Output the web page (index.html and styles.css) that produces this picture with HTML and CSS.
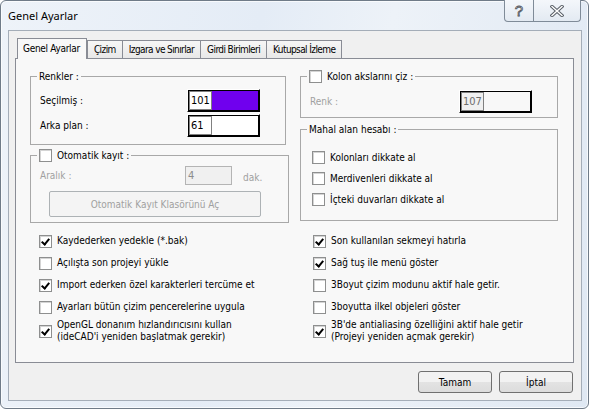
FILE: index.html
```html
<!DOCTYPE html>
<html lang="tr">
<head>
    <meta charset="UTF-8">
    <title>Genel Ayarlar</title>
    <link rel="stylesheet" href="styles.css">
</head>
<body>
    <div class="window">
        <div class="titlebar">
            <span class="title">Genel Ayarlar</span>
            <div class="caption-buttons">
                <span class="cap-btn help">?</span>
                <span class="cap-btn close">
                    <svg width="14" height="12" viewBox="0 0 14 12">
                        <path class="x-outline" d="M2 1.5 L12 10.5 M12 1.5 L2 10.5"/>
                        <path class="x-fill" d="M2 1.5 L12 10.5 M12 1.5 L2 10.5"/>
                    </svg>
                </span>
            </div>
        </div>

        <div class="client">
            <div class="tabs">
                <span class="tab active">Genel Ayarlar</span>
                <span class="tab">Çizim</span>
                <span class="tab">Izgara ve Sınırlar</span>
                <span class="tab">Girdi Birimleri</span>
                <span class="tab">Kutupsal İzleme</span>
            </div>

            <div class="panel">
                <div class="groups">
                    <div class="col">
                        <fieldset class="group colors">
                            <legend>Renkler :</legend>
                            <div class="field-row">
                                <span class="field-label">Seçilmiş :</span>
                                <span class="color-field">
                                    <span class="color-inner">
                                        <span class="color-num">101</span>
                                        <span class="color-swatch purple"></span>
                                    </span>
                                </span>
                            </div>
                            <div class="field-row">
                                <span class="field-label">Arka plan :</span>
                                <span class="color-field">
                                    <span class="color-inner">
                                        <span class="color-num">61</span>
                                        <span class="color-swatch white"></span>
                                    </span>
                                </span>
                            </div>
                        </fieldset>

                        <fieldset class="group autosave">
                            <legend><span class="box"></span>Otomatik kayıt :</legend>
                            <div class="interval-row">
                                <span class="field-label muted">Aralık :</span>
                                <span class="num-input">4</span>
                                <span class="muted unit">dak.</span>
                            </div>
                            <button class="folder-btn" disabled>Otomatik Kayıt Klasörünü Aç</button>
                        </fieldset>
                    </div>

                    <div class="col">
                        <fieldset class="group axes">
                            <legend><span class="box"></span>Kolon akslarını çiz :</legend>
                            <div class="field-row">
                                <span class="field-label muted axes-label">Renk :</span>
                                <span class="color-field off">
                                    <span class="color-inner">
                                        <span class="color-num">107</span>
                                        <span class="color-swatch"></span>
                                    </span>
                                </span>
                            </div>
                        </fieldset>

                        <fieldset class="group area">
                            <legend>Mahal alan hesabı :</legend>
                            <label class="check"><span class="box"></span>Kolonları dikkate al</label>
                            <label class="check"><span class="box"></span>Merdivenleri dikkate al</label>
                            <label class="check"><span class="box"></span>İçteki duvarları dikkate al</label>
                        </fieldset>
                    </div>
                </div>

                <div class="options">
                    <label class="check"><span class="box on"></span>Kaydederken yedekle (*.bak)</label>
                    <label class="check"><span class="box on"></span>Son kullanılan sekmeyi hatırla</label>
                    <label class="check"><span class="box"></span>Açılışta son projeyi yükle</label>
                    <label class="check"><span class="box on"></span>Sağ tuş ile menü göster</label>
                    <label class="check"><span class="box on"></span>Import ederken özel karakterleri tercüme et</label>
                    <label class="check"><span class="box"></span>3Boyut çizim modunu aktif hale getir.</label>
                    <label class="check"><span class="box"></span>Ayarları bütün çizim pencerelerine uygula</label>
                    <label class="check"><span class="box"></span>3boyutta ilkel objeleri göster</label>
                    <label class="check tall"><span class="box on"></span>OpenGL donanım hızlandırıcısını kullan<br>(ideCAD'i yeniden başlatmak gerekir)</label>
                    <label class="check tall"><span class="box on"></span>3B'de antialiasing özelliğini aktif hale getir<br>(Projeyi yeniden açmak gerekir)</label>
                </div>
            </div>

            <div class="actions">
                <button class="btn">Tamam</button>
                <button class="btn">İptal</button>
            </div>
        </div>
    </div>
</body>
</html>
```

FILE: styles.css
```css
body {
    margin: 0;
    background: #fff;
    font-family: 'DejaVu Sans Condensed', 'DejaVu Sans', sans-serif;
    font-size: 10px;
    color: #000;
}
.window {
    width: 589px;
    height: 409px;
    box-sizing: border-box;
    border: 1px solid #6f7b88;
    border-radius: 6px;
    background: linear-gradient(100deg, #eef3f9 0%, #e4ecf6 40%, #edf2f8 60%, #dfe8f3 100%);
    box-shadow: inset 0 0 0 1px rgba(255, 255, 255, 0.7);
    display: flex;
    flex-direction: column;
}

/* title bar */
.titlebar {
    height: 29px;
    display: flex;
    justify-content: space-between;
    align-items: flex-start;
    padding-left: 7px;
}
.title {
    font-family: 'Noto Sans', sans-serif;
    font-size: 11px;
    line-height: 12px;
    margin-top: 9px;
}
.caption-buttons {
    display: flex;
    margin-top: -1px;
    margin-right: 7px;
    border: 1px solid #7f8b98;
    border-top: none;
    border-radius: 0 0 4px 4px;
    background: linear-gradient(#f4f7fb, #e3eaf2);
    height: 21px;
}
.cap-btn {
    display: flex;
    align-items: center;
    justify-content: center;
}
.help {
    width: 28px;
    border-right: 1px solid #7f8b98;
    font-family: 'Liberation Sans', sans-serif;
    font-size: 15px;
    color: #fff;
    -webkit-text-stroke: 0.8px #4a4f57;
}
.close {
    width: 46px;
}
.close svg path {
    fill: none;
    stroke-linecap: square;
}
.x-outline {
    stroke: #5a6068;
    stroke-width: 3.4;
}
.x-fill {
    stroke: #fff;
    stroke-width: 1.4;
}

/* dialog body */
.client {
    flex: 1;
    margin: 0 6px 7px 7px;
    border: 1px solid #a4adb8;
    background: #f0f0f0;
    padding: 7px 7px 0 6px;
}
.tabs {
    display: flex;
    align-items: flex-end;
    height: 20px;
    padding-left: 2px;
}
.tab {
    height: 18px;
    box-sizing: border-box;
    border: 1px solid #898c95;
    border-bottom: none;
    margin-left: -1px;
    padding: 0 6px;
    line-height: 17px;
    letter-spacing: -0.6px;
    background: linear-gradient(#f6f6f6, #e8e8e8);
}
.tab.active {
    height: 21px;
    margin-bottom: -1px;
    margin-left: 0;
    padding: 0 6px 0 5px;
    line-height: 20px;
    letter-spacing: -0.3px;
    background: #f8f8f8;
    position: relative;
    z-index: 1;
}
.tab.active + .tab {
    margin-left: 0;
}
.panel {
    height: 305px;
    box-sizing: border-box;
    border: 1px solid #898c95;
    background: #f8f8f8;
    padding: 11px 15px 0 14px;
}
.groups {
    display: grid;
    grid-template-columns: 256px 258px;
    column-gap: 14px;
}
.group {
    margin: 0;
    padding: 0 9px;
    min-width: 0;
    border: 1px solid #a8a8a8;
}
.group legend {
    margin-left: -3px;
    padding: 0 2px;
    line-height: 13px;
    display: flex;
    align-items: center;
}
.colors {
    padding-top: 6px;
    padding-bottom: 5px;
}
.field-row {
    display: flex;
    align-items: center;
    margin-bottom: 2px;
}
.field-label {
    width: 147px;
}
.axes-label {
    width: 149px;
}

/* colour picker field */
.color-field {
    display: flex;
    width: 73px;
    height: 23px;
    box-sizing: border-box;
    border: 1px solid;
    border-color: #fff #000 #000 #fff;
}
.color-inner {
    flex: 1;
    display: flex;
    border: 1px solid #000;
}
.color-num {
    width: 20px;
    border: 1px solid #808080;
    background: #fff;
    line-height: 17px;
    padding-left: 1px;
    font-size: 11px;
}
.color-swatch {
    flex: 1;
}
.purple {
    background: #7000ee;
}
.white {
    background: #fff;
}
.off .color-num {
    background: #f0f0f0;
    color: #6d6d6d;
}
.off .color-swatch {
    background: #f8f8f8;
}

.autosave {
    margin-top: 4px;
    width: 259px;
    box-sizing: border-box;
    padding-top: 4px;
    padding-bottom: 5px;
}
.muted {
    color: #a0a0a0;
}
.interval-row {
    display: flex;
    align-items: center;
    height: 19px;
}
.interval-row .field-label {
    width: 145px;
}
.num-input {
    width: 47px;
    height: 19px;
    box-sizing: border-box;
    border: 1px solid #b4b4b4;
    background: #f0f0f0;
    color: #8c8c8c;
    line-height: 17px;
    padding-left: 2px;
    font-size: 11px;
}
.unit {
    margin-left: 11px;
    margin-top: 3px;
}
.folder-btn {
    display: block;
    margin: 6px 0 0 9px;
    width: 212px;
    height: 26px;
    border: 1px solid #adb2b5;
    border-radius: 2px;
    background: #f4f4f4;
    color: #a0a0a0;
    font-family: inherit;
    font-size: 10px;
}

.axes {
    padding-top: 7px;
    padding-bottom: 4px;
}
.axes .field-row {
    margin-bottom: 0;
}
.area {
    margin-top: 5px;
    padding: 11px 9px 10px 11px;
}
.area legend {
    margin-left: -5px;
}

/* checkboxes */
.box {
    width: 13px;
    height: 13px;
    box-sizing: border-box;
    border: 1px solid #8e8f8f;
    background: #fff;
    box-shadow: inset 1px 1px 0 #d4d4d4;
    margin-right: 5px;
    flex: none;
    position: relative;
}
.box.on::after {
    content: "";
    position: absolute;
    left: 3px;
    top: 1px;
    width: 3px;
    height: 6px;
    border: solid #000;
    border-width: 0 2px 2px 0;
    transform: rotate(40deg);
}
.check {
    display: flex;
    align-items: center;
    height: 22px;
    line-height: 12px;
}
.area .check {
    height: 21px;
}
.options {
    display: grid;
    grid-template-columns: 256px 258px;
    column-gap: 14px;
    margin-top: 7px;
}
.options .check:nth-child(odd) {
    padding-left: 9px;
}
.options .check:nth-child(even) {
    padding-left: 13px;
}
.check.tall {
    height: 26px;
}

/* bottom buttons */
.actions {
    display: flex;
    justify-content: flex-end;
    gap: 7px;
    margin-top: 8px;
    padding-right: 1px;
}
.btn {
    width: 74px;
    height: 22px;
    border: 1px solid #707070;
    border-radius: 3px;
    background: linear-gradient(#f2f2f2 50%, #e3e3e3 50%, #dcdcdc);
    font-family: inherit;
    font-size: 10px;
    color: #000;
}
```
